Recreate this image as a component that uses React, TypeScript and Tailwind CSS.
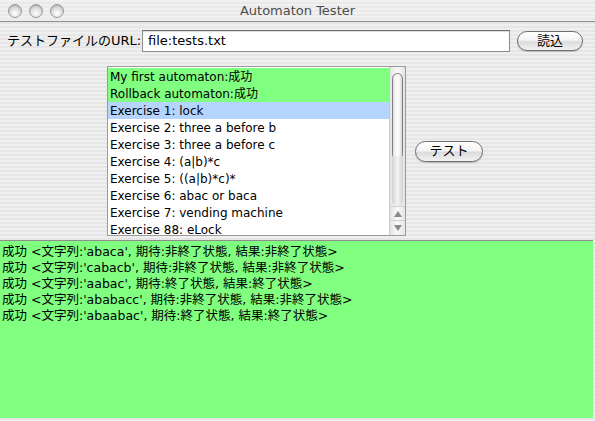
import React from "react";

const stripes =
  "bg-[repeating-linear-gradient(180deg,#efefef_0px,#efefef_2px,#e6e6e6_2px,#e6e6e6_4px)]";

const items = [
  { label: "My first automaton:成功", state: "ok" },
  { label: "Rollback automaton:成功", state: "ok" },
  { label: "Exercise 1: lock", state: "selected" },
  { label: "Exercise 2: three a before b", state: "" },
  { label: "Exercise 3: three a before c", state: "" },
  { label: "Exercise 4: (a|b)*c", state: "" },
  { label: "Exercise 5: ((a|b)*c)*", state: "" },
  { label: "Exercise 6: abac or baca", state: "" },
  { label: "Exercise 7: vending machine", state: "" },
  { label: "Exercise 88: eLock", state: "" },
];

const results = [
  "成功 <文字列:'abaca', 期待:非終了状態, 結果:非終了状態>",
  "成功 <文字列:'cabacb', 期待:非終了状態, 結果:非終了状態>",
  "成功 <文字列:'aabac', 期待:終了状態, 結果:終了状態>",
  "成功 <文字列:'ababacc', 期待:非終了状態, 結果:非終了状態>",
  "成功 <文字列:'abaabac', 期待:終了状態, 結果:終了状態>",
];

const font = "font-['DejaVu_Sans','Noto_Sans_CJK_JP',sans-serif]";

function Light() {
  return (
    <div className="h-[14px] w-[14px] rounded-full border border-[#9a9a9a] bg-[radial-gradient(circle_at_50%_70%,#ffffff_0%,#e2e2e2_45%,#b9b9b9_100%)] shadow-[inset_0_1px_1px_rgba(0,0,0,0.15)]" />
  );
}

function PillButton({ label, className }: { label: string; className: string }) {
  return (
    <button
      type="button"
      className={`flex items-center justify-center rounded-full border border-[#6f6f6f] bg-[linear-gradient(180deg,#ffffff_0%,#f4f4f4_45%,#dcdcdc_55%,#f2f2f2_100%)] text-[13px] text-black shadow-[0_1px_1px_rgba(0,0,0,0.2)] ${className}`}
    >
      {label}
    </button>
  );
}

function ScrollBar() {
  return (
    <div className="flex w-[16px] flex-col border-l border-[#c8c8c8] bg-[linear-gradient(90deg,#e4e4e4,#fafafa_50%,#e4e4e4)]">
      <div className="flex flex-1 flex-col px-[2px] pt-[6px]">
        <div className="h-[87px] rounded-full border border-[#7d7d7d] bg-[linear-gradient(90deg,#e2e2e2,#ffffff_45%,#f6f6f6_70%,#d6d6d6)]" />
        <div className="mt-[-4px] flex-1 rounded-b-full bg-[linear-gradient(90deg,#d2d2d2,#f4f4f4_50%,#d2d2d2)]" />
      </div>
      <div className="flex h-[14px] items-center justify-center border-t border-[#d0d0d0]">
        <div className="h-0 w-0 border-x-[4px] border-b-[6px] border-x-transparent border-b-[#8a8a8a]" />
      </div>
      <div className="flex h-[15px] items-center justify-center border-t border-[#d0d0d0]">
        <div className="h-0 w-0 border-x-[4px] border-t-[6px] border-x-transparent border-t-[#8a8a8a]" />
      </div>
    </div>
  );
}

export default function App() {
  return (
    <div className={`flex h-[421px] w-[595px] flex-col overflow-hidden ${stripes} ${font}`}>
      {/* title bar */}
      <div className="relative flex h-[22px] shrink-0 items-center border-b border-[#8c8c8c] bg-[repeating-linear-gradient(180deg,#f1f1f1_0px,#f1f1f1_2px,#eaeaea_2px,#eaeaea_4px)]">
        <div className="flex gap-[7px] pl-[8px]">
          <Light />
          <Light />
          <Light />
        </div>
        <div className="absolute inset-x-0 top-0 flex h-[21px] items-center justify-center text-[13px] text-[#4d4d4d]">
          Automaton Tester
        </div>
      </div>

      {/* url row */}
      <div className="mt-[8px] flex h-[22px] shrink-0 items-center">
        <span className="w-[142px] pl-[7px] text-[13px] text-black">
          テストファイルのURL:
        </span>
        <div className="flex h-[22px] w-[368px] items-center border border-[#8e8e8e] border-t-[#6e6e6e] bg-white pl-[5px] text-[13px] text-black shadow-[inset_0_1px_1px_rgba(0,0,0,0.15)]">
          file:tests.txt
        </div>
        <PillButton label="読込" className="ml-[7px] h-[20px] w-[66px]" />
      </div>

      {/* list row */}
      <div className="mt-[14px] flex h-[170px] shrink-0 items-center">
        <div className="ml-[107px] flex h-[170px] w-[299px] border border-[#9a9a9a] bg-white">
          <div className="flex-1 overflow-hidden pt-[1px]">
            {items.map((it) => (
              <div
                key={it.label}
                className={`flex h-[17px] items-center whitespace-nowrap pl-[2px] text-[12px] text-black ${
                  it.state === "ok"
                    ? "bg-[#80ff80]"
                    : it.state === "selected"
                      ? "bg-[#b5d5ff]"
                      : ""
                }`}
              >
                {it.label}
              </div>
            ))}
          </div>
          <ScrollBar />
        </div>
        <PillButton label="テスト" className="ml-[9px] h-[21px] w-[68px]" />
      </div>

      {/* results */}
      <div className="mt-[4px] mr-[2px] mb-[3px] flex-1 border-t border-[#8e8e8e] bg-[#80ff80] pt-[3px] pl-[2px]">
        {results.map((r) => (
          <div key={r} className="h-[16px] whitespace-nowrap text-[12.5px] leading-[16px] text-black">
            {r}
          </div>
        ))}
      </div>
    </div>
  );
}
